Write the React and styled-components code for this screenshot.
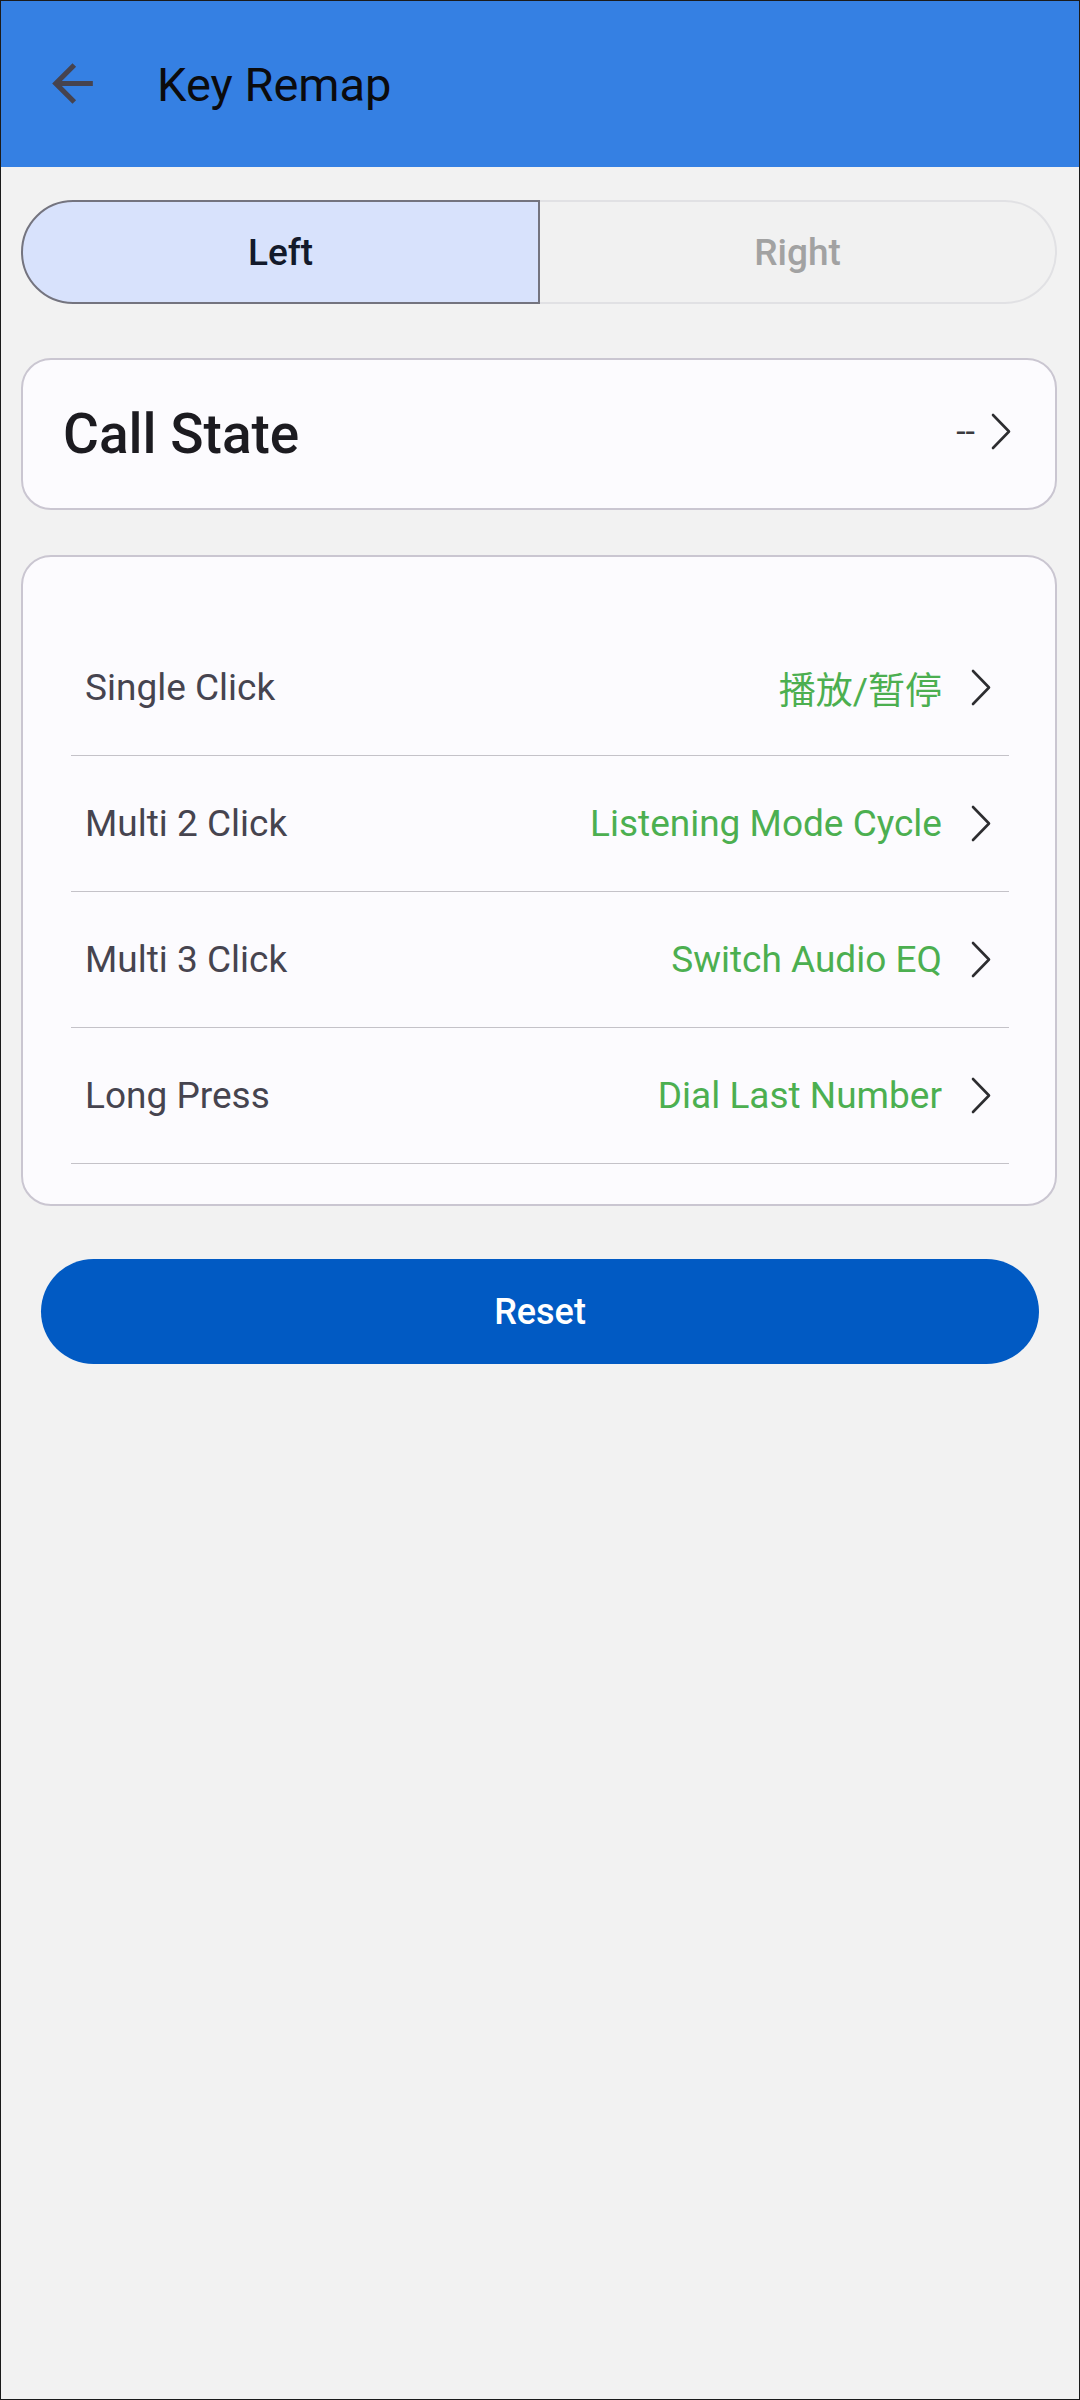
import React, { useState } from "react"
import styled, { createGlobalStyle } from "styled-components"

const GlobalStyle = createGlobalStyle`
  body {
    margin: 0;
    background: #f2f2f2;
    font-family: Roboto, "Noto Sans CJK SC", "Liberation Sans", sans-serif;
  }
  * {
    box-sizing: border-box;
  }
`

const actions = [
  { label: "Single Click", value: "播放/暂停" },
  { label: "Multi 2 Click", value: "Listening Mode Cycle" },
  { label: "Multi 3 Click", value: "Switch Audio EQ" },
  { label: "Long Press", value: "Dial Last Number" },
]

const Chevron = () => (
  <svg width="20" height="37" viewBox="0 0 20 37" fill="none">
    <polyline
      points="2,2 18,18.5 2,35"
      stroke="#2d2d30"
      strokeWidth="2.6"
      strokeLinecap="round"
      strokeLinejoin="round"
    />
  </svg>
)

const App = () => {
  const [side, setSide] = useState("left")

  return (
    <Screen>
      <GlobalStyle />
      <TopBar>
        <BackButton aria-label="back">
          <svg width="61" height="61" viewBox="0 0 24 24">
            <path
              fill="#46434f"
              d="M20 11H7.83l5.59-5.59L12 4l-8 8 8 8 1.41-1.41L7.83 13H20v-2z"
            />
          </svg>
        </BackButton>
        <Title>Key Remap</Title>
      </TopBar>

      <Content>
        <Segments>
          <Segment
            $active={side === "left"}
            $side="left"
            onClick={() => setSide("left")}
          >
            Left
          </Segment>
          <Segment
            $active={side === "right"}
            $side="right"
            onClick={() => setSide("right")}
          >
            Right
          </Segment>
        </Segments>

        <StateCard>
          <StateTitle>Call State</StateTitle>
          <StateValue>
            <span>--</span>
            <Chevron />
          </StateValue>
        </StateCard>

        <ListCard>
          {actions.map((a) => (
            <Row key={a.label}>
              <RowLabel>{a.label}</RowLabel>
              <RowValue>{a.value}</RowValue>
              <Chevron />
            </Row>
          ))}
        </ListCard>

        <ResetButton>Reset</ResetButton>
      </Content>
    </Screen>
  )
}

const Screen = styled.div`
  min-height: 2400px;
  border: 1px solid #1b1b1b;
  background: #f2f2f2;
`

const TopBar = styled.header`
  height: 166px;
  background: #3580e3;
  display: flex;
  align-items: center;
  padding-left: 41px;
`

const BackButton = styled.button`
  border: none;
  background: none;
  padding: 0;
  width: 61px;
  height: 61px;
  display: flex;
  margin-top: -2px;
`

const Title = styled.h1`
  margin: 0 0 0 54px;
  font-size: 47px;
  font-weight: 400;
  color: #0b0b0d;
`

const Content = styled.main`
  padding: 33px 22px 0 20px;
  display: flex;
  flex-direction: column;
`

const Segments = styled.div`
  display: grid;
  grid-template-columns: 519px 1fr;
  height: 104px;
`

const Segment = styled.button`
  font-family: inherit;
  font-size: 37px;
  font-weight: 500;
  cursor: pointer;
  color: ${(p) => (p.$active ? "#131a2b" : "#a2a2a2")};
  background: ${(p) => (p.$active ? "#d8e2fc" : "#f1f1f1")};
  border: 2px solid ${(p) => (p.$active ? "#74747f" : "#e1e1e4")};
  border-radius: ${(p) => (p.$side === "left" ? "52px 0 0 52px" : "0 52px 52px 0")};
  ${(p) => (p.$side === "right" ? "border-left: none;" : "")}
  padding: 0;
`

const Card = styled.section`
  background: #fcfbfe;
  border: 2px solid #cac6d1;
  border-radius: 30px;
`

const StateCard = styled(Card)`
  margin-top: 54px;
  height: 152px;
  display: flex;
  align-items: center;
  justify-content: space-between;
  padding: 0 44px 0 40px;
`

const StateTitle = styled.h2`
  margin: 0;
  font-size: 55px;
  font-weight: 500;
  color: #1c1b20;
`

const StateValue = styled.div`
  display: flex;
  align-items: center;
  gap: 16px;
  font-size: 34px;
  color: #3a3a3e;
  margin-top: -6px;
`

const ListCard = styled(Card)`
  margin-top: 45px;
  padding: 63px 46px 40px 48px;
`

const Row = styled.div`
  height: 136px;
  display: flex;
  align-items: center;
  padding: 0 18px 0 14px;
  border-bottom: 1.5px solid #c4c2c8;
`

const RowLabel = styled.span`
  flex: 1;
  font-size: 37px;
  color: #46444f;
`

const RowValue = styled.span`
  font-size: 37px;
  color: #4caf50;
  margin-right: 29px;
`

const ResetButton = styled.button`
  margin: 53px 18px 0 20px;
  height: 105px;
  border: none;
  border-radius: 53px;
  background: #015ac3;
  color: #ffffff;
  font-family: inherit;
  font-size: 36px;
  font-weight: 500;
`

export default App
